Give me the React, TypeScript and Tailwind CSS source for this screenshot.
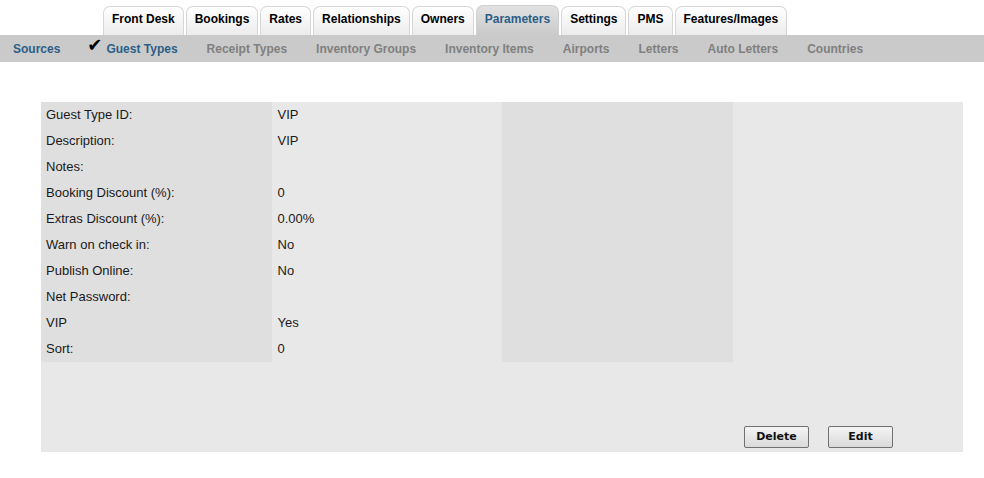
import React from 'react';

const tabs = ['Front Desk', 'Bookings', 'Rates', 'Relationships', 'Owners', 'Parameters', 'Settings', 'PMS', 'Features/Images'];
const subTabs = ['Sources', 'Guest Types', 'Receipt Types', 'Inventory Groups', 'Inventory Items', 'Airports', 'Letters', 'Auto Letters', 'Countries'];

const rows: [string, string][] = [
  ['Guest Type ID:', 'VIP'],
  ['Description:', 'VIP'],
  ['Notes:', ''],
  ['Booking Discount (%):', '0'],
  ['Extras Discount (%):', '0.00%'],
  ['Warn on check in:', 'No'],
  ['Publish Online:', 'No'],
  ['Net Password:', ''],
  ['VIP', 'Yes'],
  ['Sort:', '0'],
];

const App: React.FC = () => {
  return (
    <div className="min-h-[478px] w-[984px] bg-white font-['Liberation_Sans',Arial,sans-serif] text-[12px] text-[#1a1a1a]">
      {/* main tabs */}
      <div className="flex h-[35px] items-end gap-[2px] pl-[103px]">
        {tabs.map((t) =>
          t === 'Parameters' ? (
            <div
              key={t}
              className="flex h-[30px] items-center rounded-t-[7px] border border-b-0 border-[#cfcfcf] bg-gradient-to-b from-[#e2e2e2] to-[#cacaca] px-[8px] pb-[4px] font-bold text-[#2b5f88]"
            >
              {t}
            </div>
          ) : (
            <div
              key={t}
              className="flex h-[29px] items-center rounded-t-[7px] border border-b-0 border-[#d6d6d6] bg-gradient-to-b from-[#ffffff] to-[#ececec] px-[8px] pb-[4px] font-bold text-black"
            >
              {t}
            </div>
          )
        )}
      </div>

      {/* sub navigation */}
      <div className="flex h-[27px] items-center gap-[29px] bg-[#cacaca] pl-[13px] font-bold">
        {subTabs.map((s, i) => (
          <div key={s} className="flex items-center">
            {s === 'Guest Types' && (
              <span className="relative -top-[4px] -ml-[2px] mr-[4px] font-['DejaVu_Sans',sans-serif] text-[18px] leading-none text-black">
                ✔
              </span>
            )}
            <span className={i < 2 ? 'text-[#2b5f88]' : 'text-[#808080]'}>{s}</span>
          </div>
        ))}
      </div>

      {/* detail panel */}
      <div className="ml-[41px] mt-[40px] flex h-[350px] w-[922px] flex-col bg-[#e8e8e8] text-[13px]">
        <div className="grid grid-cols-4">
          <div className="bg-[#dfdfdf]">
            {rows.map(([label]) => (
              <div key={label} className="flex h-[26px] items-center pl-[5px]">
                {label}
              </div>
            ))}
          </div>
          <div className="bg-[#e8e8e8]">
            {rows.map(([label, value]) => (
              <div key={label} className="flex h-[26px] items-center pl-[6px]">
                {value}
              </div>
            ))}
          </div>
          <div className="bg-[#dfdfdf]" />
          <div className="bg-[#e8e8e8]" />
        </div>

        <div className="mt-auto flex justify-end gap-[19px] pb-[4px] pr-[70px]">
          {['Delete', 'Edit'].map((b) => (
            <button
              key={b}
              className="h-[22px] w-[65px] rounded-[2px] border border-[#707070] bg-gradient-to-b from-[#f4f4f4] to-[#dadada] pt-[1px] font-['DejaVu_Sans',sans-serif] text-[11px] font-bold text-[#111]"
            >
              {b}
            </button>
          ))}
        </div>
      </div>
    </div>
  );
};

export default App;
